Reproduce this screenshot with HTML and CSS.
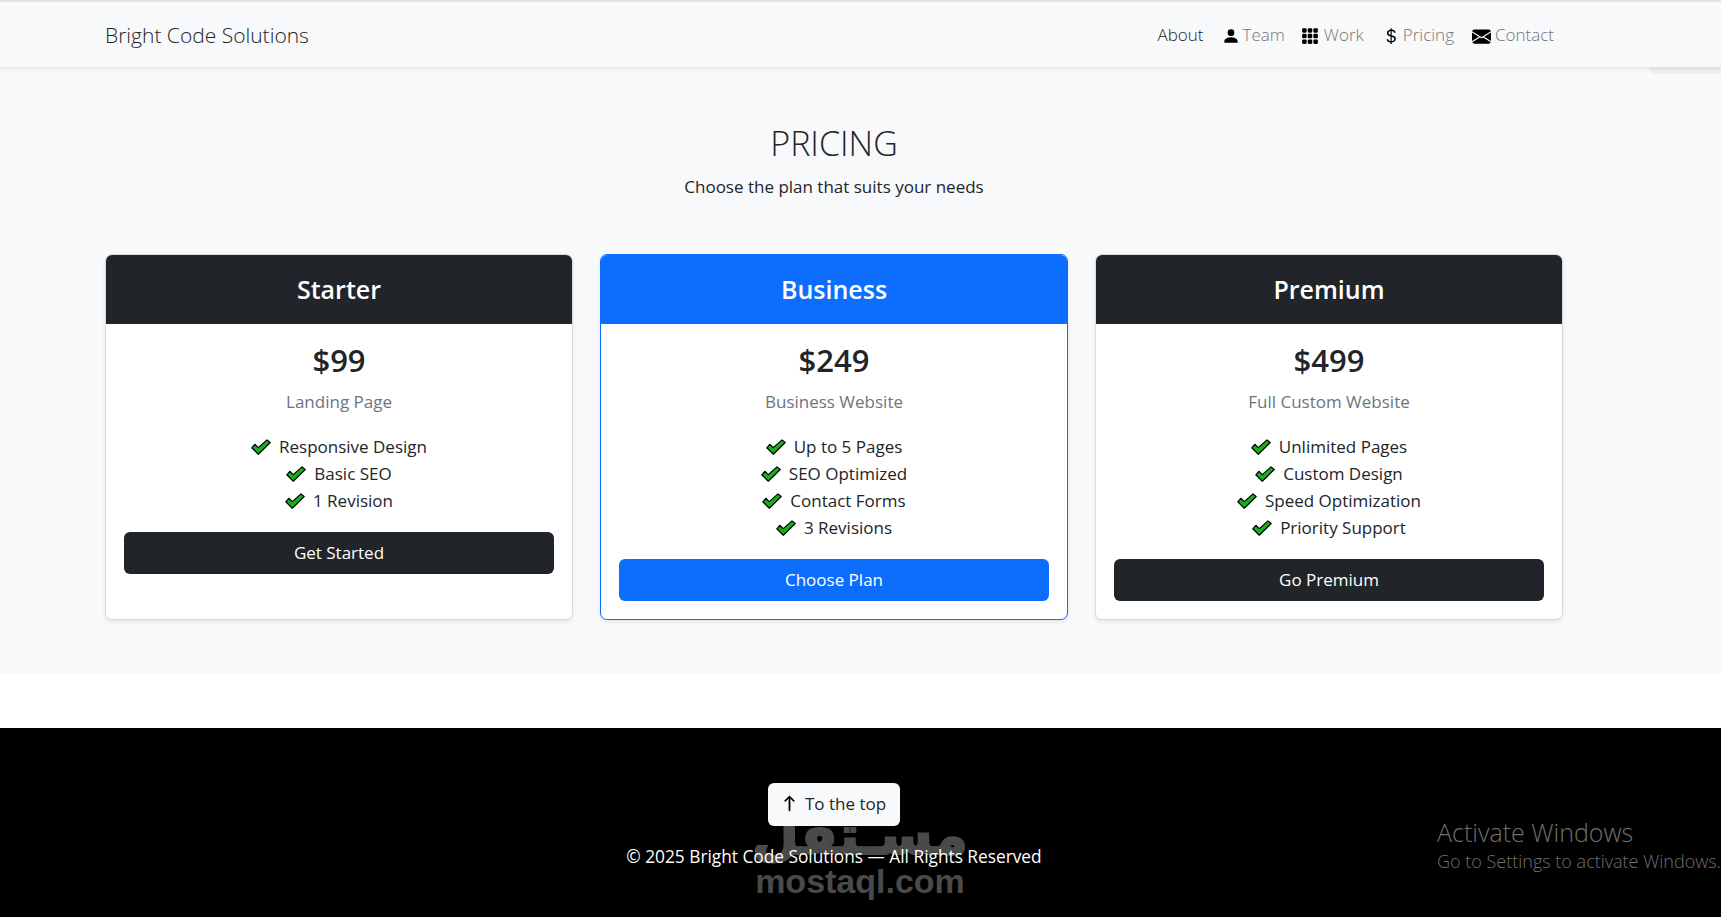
FILE: index.html
```html
<!DOCTYPE html>
<html lang="en">
<head>
    <meta charset="UTF-8">
    <meta name="viewport" content="width=device-width, initial-scale=1.0">
    <title>Bright Code Solutions</title>
    <link rel="stylesheet" href="styles.css">
</head>
<body>
    <!-- Navbar -->
    <nav class="navbar">
        <a class="brand" href="#">Bright Code Solutions</a>
        <ul class="nav-links">
            <li><a class="active" href="#">About</a></li>
            <li><a href="#"><svg class="nav-icon" viewBox="0 0 16 16"><path d="M3 14s-1 0-1-1 1-4 6-4 6 3 6 4-1 1-1 1H3Zm5-6a3 3 0 1 0 0-6 3 3 0 0 0 0 6Z"/></svg>Team</a></li>
            <li><a href="#"><svg class="nav-icon grid" viewBox="0 0 16 16"><rect x="1" y="1" width="4" height="4" rx="1"/><rect x="6" y="1" width="4" height="4" rx="1"/><rect x="11" y="1" width="4" height="4" rx="1"/><rect x="1" y="6" width="4" height="4" rx="1"/><rect x="6" y="6" width="4" height="4" rx="1"/><rect x="11" y="6" width="4" height="4" rx="1"/><rect x="1" y="11" width="4" height="4" rx="1"/><rect x="6" y="11" width="4" height="4" rx="1"/><rect x="11" y="11" width="4" height="4" rx="1"/></svg>Work</a></li>
            <li><a href="#"><svg class="nav-icon" viewBox="0 0 16 16"><path d="M4 10.781c.148 1.667 1.513 2.850 3.591 3.003V15h1.043v-1.216c2.270-.179 3.678-1.438 3.678-3.300 0-1.590-.947-2.510-2.956-3.028l-.722-.187V3.467c1.122.110 1.879.714 2.070 1.616h1.470c-.166-1.600-1.540-2.748-3.540-2.875V1H7.591v1.233c-1.939.230-3.270 1.472-3.270 3.156 0 1.454.966 2.483 2.661 2.917l.610.162v4.031c-1.149-.170-1.940-.800-2.131-1.718H4zm3.391-3.836c-1.043-.263-1.600-.825-1.600-1.616 0-.944.704-1.641 1.800-1.828v3.495l-.200-.050zm1.591 1.872c1.287.323 1.852.859 1.852 1.769 0 1.097-.826 1.828-2.200 1.939V8.730l.348.086z"/></svg>Pricing</a></li>
            <li><a href="#"><svg class="nav-icon mail" viewBox="0 0 16 16"><path d="M.05 3.555A2 2 0 0 1 2 2h12a2 2 0 0 1 1.950 1.555L8 8.414.05 3.555ZM0 4.697v7.104l5.803-3.558L0 4.697ZM6.761 8.830l-6.570 4.027A2 2 0 0 0 2 14h12a2 2 0 0 0 1.808-1.144l-6.570-4.027L8 9.586l-1.239-.756Zm3.436-.586L16 11.801V4.697l-5.803 3.547Z"/></svg>Contact</a></li>
        </ul>
    </nav>
    <div class="nav-tab"></div>

    <!-- Pricing -->
    <section class="pricing">
        <h2>PRICING</h2>
        <p class="lead">Choose the plan that suits your needs</p>
        <div class="plans">
            <div class="plan">
                <h3 class="plan-head">Starter</h3>
                <div class="plan-body">
                    <div class="price">$99</div>
                    <p class="plan-sub">Landing Page</p>
                    <ul class="features">
                        <li><svg class="check" viewBox="0 0 20 16"><path d="M.8 8.800 3.800 5.300 7.300 8.600 16 .9 19.200 3.500 7.300 15.200Z"/></svg>Responsive Design</li>
                        <li><svg class="check" viewBox="0 0 20 16"><path d="M.8 8.800 3.800 5.300 7.300 8.600 16 .9 19.200 3.500 7.300 15.200Z"/></svg>Basic SEO</li>
                        <li><svg class="check" viewBox="0 0 20 16"><path d="M.8 8.800 3.800 5.300 7.300 8.600 16 .9 19.200 3.500 7.300 15.200Z"/></svg>1 Revision</li>
                    </ul>
                    <button class="plan-btn">Get Started</button>
                </div>
            </div>
            <div class="plan featured">
                <h3 class="plan-head">Business</h3>
                <div class="plan-body">
                    <div class="price">$249</div>
                    <p class="plan-sub">Business Website</p>
                    <ul class="features">
                        <li><svg class="check" viewBox="0 0 20 16"><path d="M.8 8.800 3.800 5.300 7.300 8.600 16 .9 19.200 3.500 7.300 15.200Z"/></svg>Up to 5 Pages</li>
                        <li><svg class="check" viewBox="0 0 20 16"><path d="M.8 8.800 3.800 5.300 7.300 8.600 16 .9 19.200 3.500 7.300 15.200Z"/></svg>SEO Optimized</li>
                        <li><svg class="check" viewBox="0 0 20 16"><path d="M.8 8.800 3.800 5.300 7.300 8.600 16 .9 19.200 3.500 7.300 15.200Z"/></svg>Contact Forms</li>
                        <li><svg class="check" viewBox="0 0 20 16"><path d="M.8 8.800 3.800 5.300 7.300 8.600 16 .9 19.200 3.500 7.300 15.200Z"/></svg>3 Revisions</li>
                    </ul>
                    <button class="plan-btn">Choose Plan</button>
                </div>
            </div>
            <div class="plan">
                <h3 class="plan-head">Premium</h3>
                <div class="plan-body">
                    <div class="price">$499</div>
                    <p class="plan-sub">Full Custom Website</p>
                    <ul class="features">
                        <li><svg class="check" viewBox="0 0 20 16"><path d="M.8 8.800 3.800 5.300 7.300 8.600 16 .9 19.200 3.500 7.300 15.200Z"/></svg>Unlimited Pages</li>
                        <li><svg class="check" viewBox="0 0 20 16"><path d="M.8 8.800 3.800 5.300 7.300 8.600 16 .9 19.200 3.500 7.300 15.200Z"/></svg>Custom Design</li>
                        <li><svg class="check" viewBox="0 0 20 16"><path d="M.8 8.800 3.800 5.300 7.300 8.600 16 .9 19.200 3.500 7.300 15.200Z"/></svg>Speed Optimization</li>
                        <li><svg class="check" viewBox="0 0 20 16"><path d="M.8 8.800 3.800 5.300 7.300 8.600 16 .9 19.200 3.500 7.300 15.200Z"/></svg>Priority Support</li>
                    </ul>
                    <button class="plan-btn">Go Premium</button>
                </div>
            </div>
        </div>
    </section>

    <!-- Footer -->
    <footer class="footer">
        <a class="top-btn" href="#"><svg class="arrow" viewBox="0 0 16 16"><path d="M8 15a.5.5 0 0 0 .5-.5V2.707l3.146 3.147a.5.5 0 0 0 .708-.708l-4-4a.5.5 0 0 0-.708 0l-4 4a.5.5 0 1 0 .708.708L7.500 2.707V14.500a.5.5 0 0 0 .5.500z"/></svg>To the top</a>
        <p class="copy">© 2025 Bright Code Solutions — All Rights Reserved</p>
    </footer>

    <!-- Overlays -->
    <div class="watermark">
        <span class="wm-ar" lang="ar" dir="rtl">مسـتقل</span>
        <span class="wm-en">mostaql.com</span>
    </div>
    <div class="activate">
        <div class="activate-title">Activate Windows</div>
        <div class="activate-sub">Go to Settings to activate Windows.</div>
    </div>
</body>
</html>
```

FILE: styles.css
```css
* {
    box-sizing: border-box;
}
html, body {
    height: 917px;
    overflow: hidden;
}
body {
    margin: 0;
    background-color: #fff;
    color: #212529;
    font-family: "Open Sans", "Noto Sans", sans-serif;
    font-size: 17px;
    position: relative;
}
a {
    text-decoration: none;
    color: inherit;
}
ul {
    list-style: none;
    margin: 0;
    padding: 0;
}

/* navbar */
.navbar {
    height: 67px;
    border-top: 2px solid #e1e3e3;
    background-color: #f8f9fa;
    box-shadow: 0 2px 4px rgba(0, 0, 0, 0.08);
    display: flex;
    justify-content: space-between;
    align-items: center;
    padding: 0 167px 0 105px;
    position: relative;
    z-index: 2;
}
.brand {
    font-size: 21px;
    font-weight: 300;
    color: #212529;
}
.nav-links {
    display: flex;
    gap: 18px;
    font-size: 17px;
    font-weight: 300;
}
.nav-links a {
    display: flex;
    align-items: center;
    color: #73767a;
}
.nav-links a.active {
    color: #212529;
}
.nav-icon {
    width: 18px;
    height: 18px;
    margin-right: 3px;
    margin-top: 3px;
    fill: #000;
}
.nav-icon.grid {
    margin-left: -2px;
    margin-right: 5px;
}
.nav-icon.mail {
    width: 19px;
    height: 19px;
    margin-right: 4px;
}
.nav-tab {
    position: absolute;
    top: 66px;
    right: 0;
    width: 73px;
    height: 8px;
    background-color: #eeeff0;
    border-bottom-left-radius: 8px;
    z-index: 1;
}

/* pricing */
.pricing {
    height: 607px;
    background-color: #f8f9fa;
    padding: 55px 158px 0 105px;
    text-align: center;
}
.pricing h2 {
    margin: 0;
    font-size: 34px;
    font-weight: 300;
    line-height: 42px;
}
.lead {
    margin: 9px 0 0;
    font-size: 17px;
    line-height: 27px;
}
.plans {
    display: grid;
    grid-template-columns: repeat(3, 1fr);
    gap: 27px;
    margin-top: 54px;
    height: 366px;
}
.plan {
    background-color: #fff;
    border: 1px solid #d9dadb;
    border-radius: 7px;
    box-shadow: 0 2px 4px rgba(0, 0, 0, 0.08);
    overflow: hidden;
}
.plan-head {
    margin: 0;
    height: 69px;
    line-height: 69px;
    background-color: #212529;
    color: #fff;
    font-size: 25px;
    font-weight: 600;
}
.plan-body {
    padding: 17px 18px 18px;
}
.price {
    font-size: 31px;
    font-weight: 600;
    line-height: 38px;
}
.plan-sub {
    margin: 9px 0 18px;
    color: #6c757d;
    font-size: 17px;
    line-height: 27px;
}
.features li {
    display: flex;
    justify-content: center;
    align-items: center;
    line-height: 27px;
    font-size: 17px;
}
.check {
    width: 20px;
    height: 16px;
    margin-right: 8px;
    fill: #15b01a;
    stroke: #000;
    stroke-width: 1.200;
    stroke-linejoin: round;
}
.plan-btn {
    display: block;
    width: 100%;
    height: 42px;
    margin-top: 18px;
    padding-bottom: 3px;
    border: none;
    border-radius: 6px;
    background-color: #212529;
    color: #fff;
    font-family: inherit;
    font-size: 17px;
    cursor: pointer;
}
.featured {
    border-color: #0d6efd;
}
.featured .plan-head, .featured .plan-btn {
    background-color: #0d6efd;
}

/* footer */
.footer {
    height: 189px;
    margin-top: 54px;
    background-color: #000;
    color: #fff;
    padding: 55px 53px 0 0;
    display: flex;
    flex-direction: column;
    align-items: center;
}
.top-btn {
    display: flex;
    align-items: center;
    height: 43px;
    padding: 0 14px 2px 13px;
    background-color: #f8f9fa;
    border-radius: 6px;
    color: #212529;
    font-size: 17px;
    position: relative;
    z-index: 6;
}
.arrow {
    width: 17px;
    height: 17px;
    margin-right: 7px;
    fill: #000;
    stroke: #000;
    stroke-width: 0.700;
}
.copy {
    margin: 17px 0 0;
    font-size: 17.300px;
    line-height: 27px;
    position: relative;
    z-index: 6;
}

/* overlays */
.watermark {
    position: absolute;
    left: 755px;
    top: 806px;
    width: 210px;
    display: flex;
    flex-direction: column;
    align-items: center;
    color: #4a4a4a;
    font-weight: 700;
    pointer-events: none;
    z-index: 5;
}
.wm-ar {
    font-family: "DejaVu Sans", sans-serif;
    font-size: 54px;
    line-height: 60px;
    white-space: nowrap;
    -webkit-text-stroke: 2px #4a4a4a;
}
.wm-en {
    font-family: "Liberation Sans", sans-serif;
    font-size: 34px;
    line-height: 36px;
    margin-top: -3px;
}
.activate {
    position: absolute;
    left: 1437px;
    top: 816px;
    width: 284px;
    white-space: nowrap;
    overflow: hidden;
    color: #6f6f6f;
    font-weight: 300;
    z-index: 5;
}
.activate-title {
    font-size: 25px;
    line-height: 33px;
}
.activate-sub {
    font-size: 18px;
    line-height: 24px;
}
```
